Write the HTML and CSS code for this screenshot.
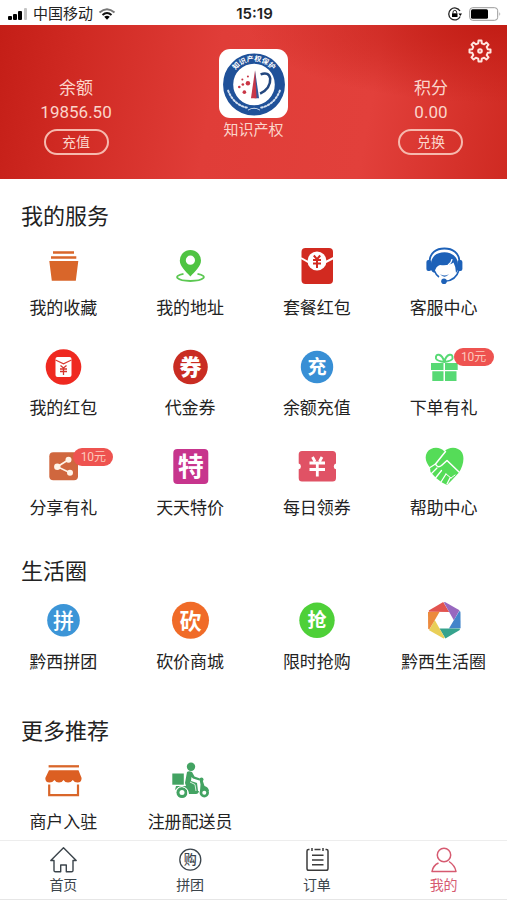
FILE: index.html
```html
<!DOCTYPE html>
<html lang="zh-CN">
<head>
<meta charset="utf-8">
<meta name="viewport" content="width=device-width, initial-scale=1">
<title>我的</title>
<link rel="stylesheet" href="styles.css">
</head>
<body>
<div class="status">
  <div class="status-left">
    <svg class="signal" viewBox="0 0 20 14" aria-hidden="true"><rect x="0" y="9" width="4" height="4" rx="1"/><rect x="5" y="7" width="4" height="6" rx="1"/><rect x="10" y="4" width="4" height="9" rx="1"/><rect x="16" y="1" width="3" height="12" rx="1" fill="#c4c4c4"/></svg>
    <span>中国移动</span>
    <svg class="wifi" viewBox="0 0 18 14" aria-hidden="true"><g fill="none" stroke-width="2"><path d="M1.500 5.500Q9-1 16.500 5.500" stroke="#777"/><path d="M4.500 8Q9 4 13.500 8" stroke="#111"/></g><path d="M6.200 9.800Q9 7.600 11.800 9.800L9 12.800Z"/></svg>
  </div>
  <time class="clock">15:19</time>
  <div class="status-right">
    <svg class="lock" viewBox="0 0 14 14" aria-hidden="true"><path d="M12 4A6 6 0 1 0 12.200 9.500" fill="none" stroke="#222" stroke-width="1.300"/><path d="M10.500 6.500H14L12.300 9Z"/><rect x="4" y="6.300" width="5.500" height="3.700"/><path d="M5 6.500V5.200a1.800 1.800 0 0 1 3.600 0V6.500" fill="none" stroke="#222"/></svg>
    <svg class="battery" viewBox="0 0 32 14" aria-hidden="true"><rect x=".7" y=".7" width="28" height="12.600" rx="3" fill="#fff" stroke="#999"/><rect x="2" y="2.200" width="17" height="9.600" rx="1.500"/><path d="M30.500 5v4q1.500-2 0-4Z" fill="#888"/></svg>
  </div>
</div>

<header class="hero">
  <div class="account">
    <span class="account-name">余额</span>
    <span class="account-value">19856.50</span>
    <button class="pill" type="button">充值</button>
  </div>
  <div class="profile">
    <svg class="logo" viewBox="0 0 68 68" role="img" aria-label="知识产权保护">
      <rect width="68" height="68" rx="11" fill="#fff"/>
      <circle cx="34.500" cy="35" r="25.500" fill="none" stroke="#1f5199" stroke-width="10"/>
      <path id="ring" d="M11.500 35a23 23 0 0 1 46 0" fill="none"/>
      <text class="logo-text" text-anchor="middle"><textPath href="#ring" startOffset="50%">知识产权保护</textPath></text>
      <g fill="none" stroke="#d5e1f1" stroke-linecap="round"><path d="M9 41Q15 56 29 58" stroke-width="2" stroke-dasharray="1.500 2"/><path d="M60 41Q54 56 40 58" stroke-width="2" stroke-dasharray="1.500 2"/><path d="M29 60Q34.500 57 40 60"/></g>
      <path d="M35.500 21L31.500 48.500H35.500Z" fill="#c6394b"/><path d="M35.500 21L39.500 48.500H35.500Z" fill="#35579a"/><path d="M35.500 21L37 48.500H35Z" fill="#cc3445"/>
      <path d="M41 25Q49 22 50.500 29Q51 39 40.500 44" fill="none" stroke="#23477f" stroke-width="2.500"/>
      <g fill="#c93645"><circle cx="28.500" cy="33.700" r="2.200"/><circle cx="25" cy="42.500" r="1.800"/><circle cx="23.500" cy="35" r="1.300"/><circle cx="20" cy="37.500" r="1.300"/><circle cx="28.500" cy="27" r="1"/><circle cx="23" cy="30" r="1"/></g>
    </svg>
    <span class="profile-name">知识产权</span>
  </div>
  <div class="account">
    <span class="account-name">积分</span>
    <span class="account-value">0.00</span>
    <button class="pill" type="button">兑换</button>
  </div>
  <button class="settings" type="button" aria-label="设置">
    <svg viewBox="0 0 24 24" aria-hidden="true"><g fill="none" stroke="#ffe6df" stroke-width="2" stroke-linejoin="round"><path d="M10.200 4.300L10.500 1.500H13.500L13.800 4.300L16.200 5.300L18.400 3.500L20.500 5.600L18.700 7.800L19.700 10.200L22.500 10.500V13.500L19.700 13.800L18.700 16.200L20.500 18.400L18.400 20.500L16.200 18.700L13.800 19.700L13.500 22.500H10.500L10.200 19.700L7.800 18.700L5.600 20.500L3.500 18.400L5.300 16.200L4.300 13.800L1.500 13.500V10.500L4.300 10.200L5.300 7.800L3.500 5.600L5.600 3.500L7.800 5.300Z"/><circle cx="12" cy="12" r="1.800"/></g></svg>
  </button>
</header>

<main class="content">
  <section class="section">
    <h2>我的服务</h2>
    <div class="grid">
      <a class="item" href="#"><span class="icon"><svg viewBox="0 0 40 40" aria-hidden="true"><path fill="#d9662a" d="M10 5.300H31V7.800H10ZM8 10.300H33.300V12.800H8ZM6.300 15H35.300L32.800 34.700H8.800Z"/></svg></span>我的收藏</a>
      <a class="item" href="#"><span class="icon"><svg viewBox="0 0 40 40" aria-hidden="true"><path fill="#4fc442" fill-rule="evenodd" d="M20.400 4a10.600 10.600 0 0 1 10.600 10.600C31 20.500 25 25.500 20.400 30.500C15.800 25.500 9.800 20.500 9.800 14.600A10.600 10.600 0 0 1 20.400 4ZM20.400 9.600a4.600 4.600 0 1 0 0 9.200a4.600 4.600 0 0 0 0-9.200Z"/><path d="M13.500 27.800C2 30 7 35 20.400 35S39 30 27.500 27.800" fill="none" stroke="#5cc852" stroke-width="1.800"/></svg></span>我的地址</a>
      <a class="item" href="#"><span class="icon"><svg viewBox="0 0 40 40" aria-hidden="true"><rect x="4.500" y="2" width="31.500" height="36" rx="4" fill="#d22a20"/><path d="M4 12L13 17H27L36.500 12" fill="none" stroke="#fff" stroke-width="2"/><circle cx="20" cy="15" r="9.500" fill="#fff"/><path d="M16.800 9.500L20 13.200L23.200 9.500M16 14H24M16 17.500H24M20 13.500V22" fill="none" stroke="#d22a20" stroke-width="2"/></svg></span>套餐红包</a>
      <a class="item" href="#"><span class="icon"><svg viewBox="0 0 40 40" aria-hidden="true"><g fill="#1d61b8"><rect x="2.400" y="14" width="5" height="11" rx="2"/><rect x="33.400" y="14" width="5" height="11" rx="2"/><path d="M7 24V19C7 10 13 6.200 20.500 6.200S34 11 34 19V24L32 27Q32 21 29.500 16.500Q25 20 16 19Q11.500 20 10.500 27Q8 26 7 24Z"/><circle cx="20" cy="35.300" r="2.800"/></g><path d="M5.500 15C6 7 12 2.500 20.400 2.500S35 7 35.500 15" fill="none" stroke="#1d61b8" stroke-width="1.800"/><path d="M35 24Q32 34.500 21 35.300M10.500 25Q12 29 15 31" fill="none" stroke="#1d61b8" stroke-width="1.600"/><path d="M16 28Q20.500 31 25 28Q20.500 33.500 16 28Z" fill="#1d61b8"/><path d="M28 13Q27.500 17 24 19" fill="none" stroke="#fff" stroke-width="1.200"/></svg></span>客服中心</a>
      <a class="item" href="#"><span class="icon"><svg viewBox="0 0 40 40" aria-hidden="true"><circle cx="20.500" cy="21" r="17.800" fill="#ef2920"/><rect x="12.500" y="11" width="16" height="20" rx="2" fill="#fff"/><path d="M12.500 14L20.500 17.800L28.500 14" fill="none" stroke="#d93a30" stroke-width="1.200"/><path d="M17.500 19.500L20.500 22L23.500 19.500M17 23H24M17 25.500H24M20.500 22V29" fill="none" stroke="#d5352d" stroke-width="1.300"/></svg></span>我的红包</a>
      <a class="item" href="#"><span class="icon"><svg viewBox="0 0 40 40" aria-hidden="true"><circle cx="20.500" cy="21" r="17.300" fill="#c92c22"/><text class="glyph heavy" x="20.500" y="29">券</text></svg></span>代金券</a>
      <a class="item" href="#"><span class="icon"><svg viewBox="0 0 40 40" aria-hidden="true"><circle cx="20" cy="21" r="16.200" fill="#388fd5"/><text class="glyph small" x="20" y="28">充</text></svg></span>余额充值</a>
      <a class="item" href="#"><span class="icon"><svg viewBox="0 0 40 40" aria-hidden="true"><path fill="#57d974" d="M7 17H19.500V24H7ZM21 17H33.700V24H21ZM8.300 25.200H19.500V35H8.300ZM21 25.200H32.500V35H21Z"/><path d="M20.300 16C18 7 11 7 12 12.500Q13 15 20.300 16C22.500 7 29.500 7 28.500 12.500Q27.500 15 20.300 16" fill="none" stroke="#57d974" stroke-width="2"/></svg><span class="badge">10元</span></span>下单有礼</a>
      <a class="item" href="#"><span class="icon"><svg viewBox="0 0 40 40" aria-hidden="true"><rect x="6.300" y="6.300" width="28.700" height="28" rx="4" fill="#d0673e"/><path d="M25.500 13.700L14.300 20.700L27 26.700" fill="none" stroke="#fff4e8" stroke-width="1.600"/><g fill="#fff4e8"><circle cx="25.500" cy="13.700" r="3"/><circle cx="14.300" cy="20.700" r="3.200"/><circle cx="27" cy="26.700" r="3"/></g></svg><span class="badge">10元</span></span>分享有礼</a>
      <a class="item" href="#"><span class="icon"><svg viewBox="0 0 40 40" aria-hidden="true"><rect x="3.300" y="3" width="35" height="35" rx="4" fill="#c7358d"/><text class="glyph large" x="20.800" y="30">特</text></svg></span>天天特价</a>
      <a class="item" href="#"><span class="icon"><svg viewBox="0 0 40 40" aria-hidden="true"><path fill="#e05265" d="M5 5H35.500Q39 5 39 8.500V17.500A3 3 0 0 0 39 23.300V32Q39 35.500 35.500 35.500H5Q1.700 35.500 1.700 32V23.300A3 3 0 0 0 1.700 17.500V8.500Q1.700 5 5 5Z"/><path d="M15.500 11L18 15.500M25 11L22.500 15.500M12.500 17H28M12.500 23.500H28M20.300 16V30.500" fill="none" stroke="#fff" stroke-width="2.800"/></svg></span>每日领券</a>
      <a class="item" href="#"><span class="icon"><svg viewBox="0 0 40 40" aria-hidden="true"><path fill="#55dc58" d="M20.400 5.500C16 .5 7 .5 3 6.500C0 12 2.500 17.500 6 21.500L6.500 26L12 32L18 36.500L23 39L28 34L35 26.500C39 20 41 12 38 6.500C34 .5 25 .5 20.400 5.500Z"/><g fill="none" stroke="#fff" stroke-linecap="round" stroke-linejoin="round"><path d="M21.500 5.500L11.500 18Q13.500 22.500 17.500 19.500L23 14.500L35 26" stroke-width="1.500"/><path d="M6 21.500L11.500 18M7.500 27.500L13 22M11.500 32L17.500 24.500M17 36L22 28M23 38L26 32" stroke-width="1.300"/><path d="M27 32L31 29M22 28L27 32" stroke-width="1"/></g></svg></span>帮助中心</a>
    </div>
  </section>

  <section class="section">
    <h2>生活圈</h2>
    <div class="grid">
      <a class="item" href="#"><span class="icon"><svg viewBox="0 0 40 40" aria-hidden="true"><circle cx="20.500" cy="20.300" r="16.300" fill="#3c95d7"/><text class="glyph light" x="20.500" y="28">拼</text></svg></span>黔西拼团</a>
      <a class="item" href="#"><span class="icon"><svg viewBox="0 0 40 40" aria-hidden="true"><circle cx="20.500" cy="20.300" r="18.500" fill="#f06b28"/><text class="glyph" x="20.500" y="29">砍</text></svg></span>砍价商城</a>
      <a class="item" href="#"><span class="icon"><svg viewBox="0 0 40 40" aria-hidden="true"><circle cx="20" cy="20.300" r="17.700" fill="#4ed038"/><text class="glyph small" x="20" y="27">抢</text></svg></span>限时抢购</a>
      <a class="item" href="#"><span class="icon"><svg viewBox="0 0 40 40" aria-hidden="true"><path fill="#e25450" d="M4.800 11.800V10.500L19.200 2L25.200 12Z"/><path fill="#9868bf" d="M4.800 11.800V10.500L19.200 2L25.200 12Z" transform="rotate(60 20.300 20.200)"/><path fill="#4385ca" d="M4.800 11.800V10.500L19.200 2L25.200 12Z" transform="rotate(120 20.300 20.200)"/><path fill="#36a38d" d="M4.800 11.800V10.500L19.200 2L25.200 12Z" transform="rotate(180 20.300 20.200)"/><path fill="#e9cf58" d="M4.800 11.800V10.500L19.200 2L25.200 12Z" transform="rotate(240 20.300 20.200)"/><path fill="#ec8a3d" d="M4.800 11.800V10.500L19.200 2L25.200 12Z" transform="rotate(300 20.300 20.200)"/></svg></span>黔西生活圈</a>
    </div>
  </section>

  <section class="section section-last">
    <h2>更多推荐</h2>
    <div class="grid">
      <a class="item" href="#"><span class="icon"><svg viewBox="0 0 40 40" aria-hidden="true"><path d="M5.600 6.300H36" stroke="#d9662a" stroke-width="2.300"/><path fill="#dc5f22" d="M6 10.300H35.500L38.600 18Q38.600 22.500 34.500 22.500Q31.500 22.500 29.800 20Q28 22.500 25 22.500Q22 22.500 20.500 20Q19 22.500 16 22.500Q13 22.500 11.500 20Q9.500 22.500 6.500 22.500Q2.300 22.500 2.300 18Z"/><path d="M6.200 24.500V35.200H35V24.500" fill="none" stroke="#d9662a" stroke-width="2.200"/></svg></span>商户入驻</a>
      <a class="item" href="#"><span class="icon"><svg viewBox="0 0 40 40" aria-hidden="true"><g fill="#43a362"><rect x="2.300" y="13.500" width="11.500" height="11.200"/><circle cx="21" cy="6.800" r="4.200"/><path d="M17 12Q19 10.500 22 12L24.500 16.500L30 18.500L29.300 20.500L23 18.500L21.500 17L21 21L27 23L28 31H30L30.500 24.500L29.500 19L32.500 20L34.500 26Q38.500 27 39 31H29Q28.500 34 26 34H19Q18 27 12 27Q8 27 5 30L6 26H16L15 23Z"/><circle cx="12" cy="32.500" r="5.500"/><circle cx="34.300" cy="32.800" r="4.700"/><circle cx="31.500" cy="19.500" r="2"/></g><g fill="#fff"><circle cx="12" cy="32.500" r="2.500"/><circle cx="34.300" cy="32.800" r="2"/></g><path d="M6.500 29Q12 23.500 17.500 30L18 34" fill="none" stroke="#fff"/><path d="M20 22L25 24.500L26 31" fill="none" stroke="#d9f0df"/></svg></span>注册配送员</a>
    </div>
  </section>
</main>

<nav class="tabs">
  <a class="tab" href="#"><svg viewBox="0 0 28 28" aria-hidden="true"><path d="M14.500 2.700L1.800 15.500H5V25.500Q5 26.800 6.500 26.800H11.700V20H17.300V26.800H22.500Q24 26.800 24 25.500V15.500H27.200Z" fill="none" stroke="#3b444b" stroke-width="1.400" stroke-linejoin="round"/></svg>首页</a>
  <a class="tab" href="#"><svg viewBox="0 0 28 28" aria-hidden="true"><circle cx="14.300" cy="14.700" r="10.500" fill="none" stroke="#3b444b" stroke-width="1.300"/><text class="tab-glyph" x="14.300" y="19">购</text></svg>拼团</a>
  <a class="tab" href="#"><svg viewBox="0 0 28 28" aria-hidden="true"><path d="M6.500 4.500H5.500Q4 4.500 4 6V23.500Q4 25.300 5.800 25.300H23.200Q25 25.300 25 23.500V6Q25 4.500 23.500 4.500H22.500M11.500 4.500H17.500M9 3V6M20 3V6M9 10.300H20.500M9 15H20.500M9 19.700H20.500" fill="none" stroke="#3b3b3b" stroke-width="1.500"/></svg>订单</a>
  <a class="tab active" href="#" aria-current="page"><svg viewBox="0 0 28 28" aria-hidden="true"><g fill="none" stroke="#d65a70" stroke-width="1.500" stroke-linejoin="round"><circle cx="14" cy="10" r="6.700"/><path d="M8.500 18Q3 20.500 2 26.500H26Q25 20.500 19 16.500"/></g></svg>我的</a>
</nav>
</body>
</html>
```

FILE: styles.css
```css
* {
  box-sizing: border-box;
}

body {
  margin: 0;
  min-height: 100vh;
  display: flex;
  flex-direction: column;
  background: #fff;
  color: #222;
  font-family: "Roboto", "Noto Sans CJK SC", sans-serif;
}

a {
  color: inherit;
  text-decoration: none;
}

button {
  font: inherit;
  color: inherit;
  background: none;
  border: 0;
  padding: 0;
}

svg {
  display: block;
}

/* Status bar */
.status {
  display: grid;
  grid-template-columns: 1fr auto 1fr;
  align-items: center;
  height: 25px;
  padding: 2px 6px 0 8px;
  font-size: 15px;
  line-height: 22px;
}

.status-left,
.status-right {
  display: flex;
  align-items: center;
  gap: 5px;
}

.status-right {
  justify-content: flex-end;
  gap: 7px;
}

.signal {
  width: 20px;
  height: 14px;
}

.wifi {
  width: 18px;
  height: 14px;
}

.lock {
  width: 14px;
  height: 14px;
}

.battery {
  width: 32px;
  height: 14px;
}

.clock {
  font-family: "Inter", sans-serif;
  font-weight: 600;
}

/* Account header */
.hero {
  position: relative;
  display: grid;
  grid-template-columns: 3fr 4fr 3fr;
  padding-bottom: 24px;
  color: #fbd5cb;
  background:
    radial-gradient(ellipse at 100% 0, #c21d15 0, rgba(194, 29, 21, 0) 36%),
    linear-gradient(100deg, #c41e17 0, #d02a23 16%, #e03d38 42%, #e2403b 72%, #cf2a22 100%);
}

.account,
.profile {
  display: flex;
  flex-direction: column;
  align-items: center;
}

.account {
  padding-top: 51px;
  font-size: 17px;
  line-height: 24px;
}

.pill {
  width: 65px;
  height: 26px;
  margin-top: 5px;
  border: 2px solid #f6b9ae;
  border-radius: 13px;
  font-size: 14px;
  line-height: 20px;
}

.profile {
  padding-top: 24px;
  font-size: 15px;
  line-height: 24px;
}

.logo {
  width: 69px;
  height: 69px;
}

.logo-text {
  font-size: 7px;
  font-weight: 700;
  fill: #fff;
}

.settings {
  position: absolute;
  top: 14px;
  right: 15px;
  width: 24px;
  height: 24px;
}

/* Service groups */
.content {
  flex: 1;
  padding-top: 24px;
}

.section {
  margin-bottom: 38px;
}

.section-last {
  margin: 44px 0 0;
}

h2 {
  margin: 0 21px 15px;
  font-size: 22px;
  font-weight: 400;
  line-height: 28px;
}

.section + .section h2 {
  margin-bottom: 14px;
}

.grid {
  display: grid;
  grid-template-columns: repeat(4, 1fr);
  row-gap: 26px;
}

.item {
  display: flex;
  flex-direction: column;
  align-items: center;
  gap: 10px;
  font-size: 17px;
  line-height: 24px;
  white-space: nowrap;
}

.icon {
  position: relative;
  width: 40px;
  height: 40px;
}

.badge {
  position: absolute;
  top: 2px;
  left: 30px;
  width: 40px;
  height: 18px;
  border-radius: 9px;
  background: #ee5350;
  color: #fcc9bd;
  font-size: 12px;
  line-height: 18px;
  text-align: center;
}

.glyph {
  font-size: 22px;
  font-weight: 700;
  fill: #fff;
  text-anchor: middle;
}

.small {
  font-size: 19px;
}

.large {
  font-size: 26px;
}

.heavy {
  font-weight: 900;
}

.light {
  font-size: 21px;
  font-weight: 500;
}

/* Tab bar */
.tabs {
  position: sticky;
  bottom: 0;
  display: grid;
  grid-template-columns: repeat(4, 1fr);
  padding: 4px 0;
  background: #fff;
  border-top: 1px solid #ededed;
  border-bottom: 1px solid #e6e6e6;
}

.tab {
  display: flex;
  flex-direction: column;
  align-items: center;
  gap: 2px;
  font-size: 14px;
  line-height: 20px;
  color: #3b444b;
}

.tab svg {
  width: 28px;
  height: 28px;
}

.tab-glyph {
  font-size: 13px;
  font-weight: 500;
  fill: #3b444b;
  text-anchor: middle;
}

.active {
  color: #d65a70;
}
```
